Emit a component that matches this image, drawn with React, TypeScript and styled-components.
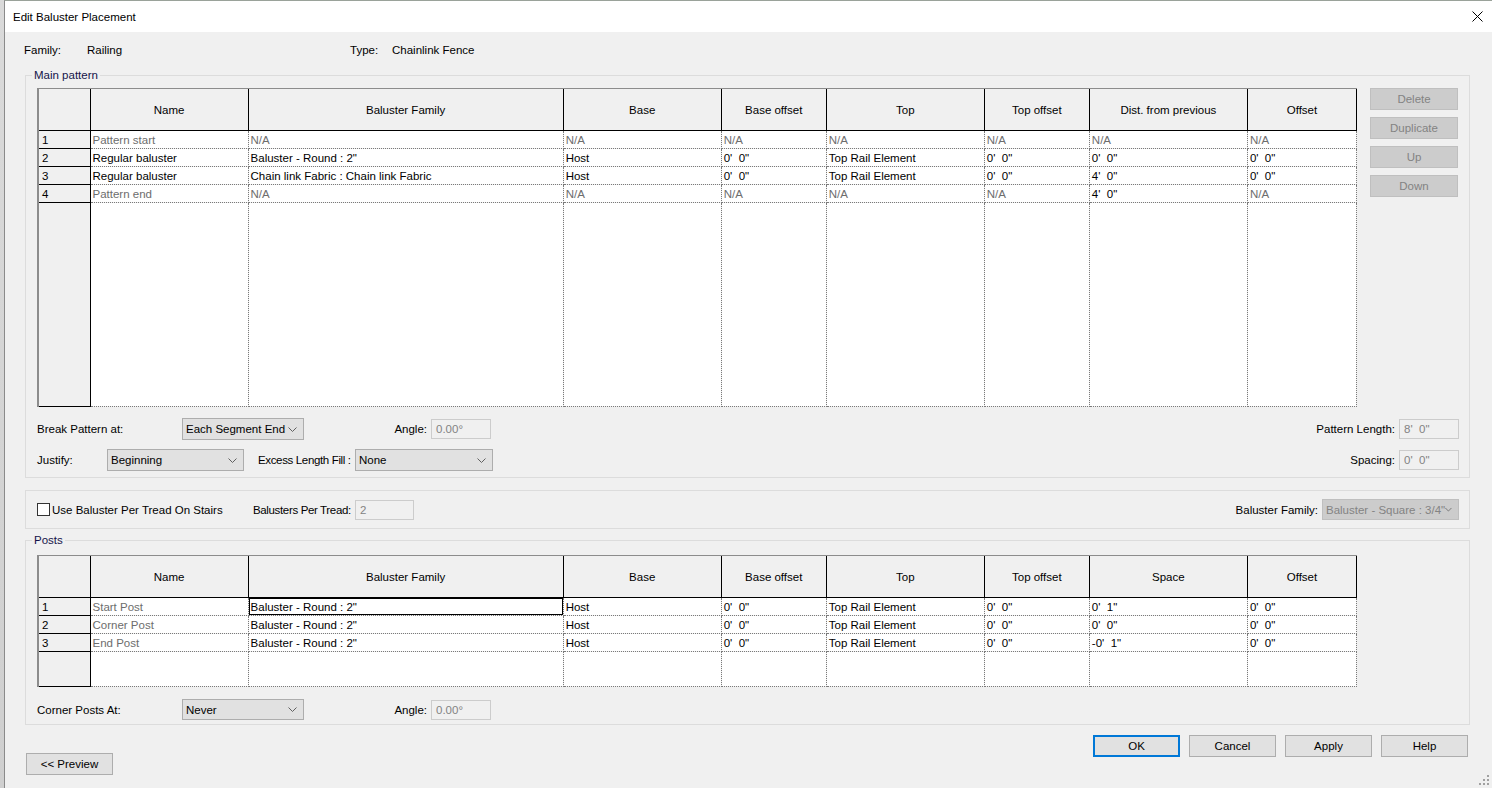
import React from "react";
import styled, { createGlobalStyle } from "styled-components";

const GlobalStyle = createGlobalStyle`
  html, body {
    margin: 0;
    padding: 0;
  }
  body {
    font-family: "Liberation Sans", Arial, sans-serif;
    font-size: 11.5px;
    color: #000;
    background: #f0f0f0;
  }
  #root {
    width: 1492px;
    height: 788px;
    overflow: hidden;
  }
`;

type Cell = { text: string; dim?: boolean; focus?: boolean };
type Row = { num: string; cells: Cell[] };

const mainCols = [
  { name: "Name", width: 158 },
  { name: "Baluster Family", width: 315 },
  { name: "Base", width: 158 },
  { name: "Base offset", width: 105 },
  { name: "Top", width: 158 },
  { name: "Top offset", width: 105 },
  { name: "Dist. from previous", width: 158 },
  { name: "Offset", width: 109 },
];

const postCols = mainCols.map((c) =>
  c.name === "Dist. from previous" ? { ...c, name: "Space" } : c
);

const na = (n: number): Cell[] =>
  Array.from({ length: n }, () => ({ text: "N/A", dim: true }));

const zero = `0'  0"`;

const mainRows: Row[] = [
  { num: "1", cells: [{ text: "Pattern start", dim: true }, ...na(7)] },
  {
    num: "2",
    cells: [
      { text: "Regular baluster" },
      { text: `Baluster - Round : 2"` },
      { text: "Host" },
      { text: zero },
      { text: "Top Rail Element" },
      { text: zero },
      { text: zero },
      { text: zero },
    ],
  },
  {
    num: "3",
    cells: [
      { text: "Regular baluster" },
      { text: "Chain link Fabric : Chain link Fabric" },
      { text: "Host" },
      { text: zero },
      { text: "Top Rail Element" },
      { text: zero },
      { text: `4'  0"` },
      { text: zero },
    ],
  },
  {
    num: "4",
    cells: [
      { text: "Pattern end", dim: true },
      ...na(5),
      { text: `4'  0"` },
      { text: "N/A", dim: true },
    ],
  },
];

const postRow = (num: string, name: string, space: string, focus = false): Row => ({
  num,
  cells: [
    { text: name, dim: true },
    { text: `Baluster - Round : 2"`, focus },
    { text: "Host" },
    { text: zero },
    { text: "Top Rail Element" },
    { text: zero },
    { text: space },
    { text: zero },
  ],
});

const postRows: Row[] = [
  postRow("1", "Start Post", `0'  1"`, true),
  postRow("2", "Corner Post", zero),
  postRow("3", "End Post", `-0'  1"`),
];

const Screen = styled.div`
  display: flex;
  width: 1492px;
  height: 788px;
`;

const BackApp = styled.div`
  width: 4px;
  background: linear-gradient(#dadada, #cfcfcf);
`;

const Dialog = styled.div`
  flex: 1;
  display: flex;
  flex-direction: column;
  position: relative;
  background: #f0f0f0;
  border-left: 1px solid #8a8a8a;
  border-top: 1px solid #9aa29a;
`;

const TitleBar = styled.div`
  height: 31px;
  flex-shrink: 0;
  display: flex;
  align-items: center;
  justify-content: space-between;
  padding: 0 9px 0 8px;
  background: #fff;
`;

const Body = styled.div`
  display: flex;
  flex-direction: column;
  padding: 0 22px 0 20px;
`;

const InfoRow = styled.div`
  display: flex;
  align-items: center;
  height: 14px;
  margin: 11px 0 0 -1px;
`;

const InfoText = styled.span<{ $w?: number }>`
  width: ${(p) => (p.$w ? `${p.$w}px` : "auto")};
  flex-shrink: 0;
`;

const Group = styled.div<{ $mt: number; $pt: number; $pb: number }>`
  position: relative;
  margin-top: ${(p) => p.$mt}px;
  padding: ${(p) => p.$pt}px 10px ${(p) => p.$pb}px 11px;
  border: 1px solid #dcdcdc;
`;

const Legend = styled.span`
  position: absolute;
  top: -8px;
  left: 6px;
  padding: 0 2px;
  line-height: 14px;
  background: #f0f0f0;
  color: #14144a;
`;

const PatternTop = styled.div`
  display: flex;
  align-items: flex-start;
  gap: 13px;
`;

const SideButtons = styled.div`
  display: flex;
  flex-direction: column;
  gap: 7px;
`;

const GridWrap = styled.div`
  width: 1318px;
  border-top: 1px solid #8c8c8c;
  border-left: 2px solid #8c8c8c;
`;

const Grid = styled.table`
  width: 1318px;
  table-layout: fixed;
  border-collapse: collapse;
  border-top-style: hidden;
  border-left-style: hidden;
  font-size: 11.5px;
`;

const HeadCell = styled.th`
  height: 41px;
  padding: 0;
  font-weight: normal;
  text-align: center;
  background: #f0f0f0;
  border: 1px solid #000;
  white-space: nowrap;
`;

const NumCell = styled.td`
  padding: 0 3px;
  background: #f0f0f0;
  border: 1px solid #000;
  text-align: left;
`;

const DataCell = styled.td<{ $dim?: boolean; $focus?: boolean }>`
  padding: 0 2px;
  background: #fff;
  border: 1px dotted #7a7a7a;
  color: ${(p) => (p.$dim ? "#6d6d6d" : "#000")};
  white-space: pre;
  overflow: hidden;
  box-shadow: ${(p) => (p.$focus ? "inset 0 0 0 1px #000" : "none")};
`;

const DataRow = styled.tr<{ $h: number }>`
  height: ${(p) => p.$h}px;
  line-height: 14px;
`;

const ControlRow = styled.div<{ $mt: number; $h?: number }>`
  display: flex;
  align-items: center;
  height: ${(p) => p.$h ?? 22}px;
  margin-top: ${(p) => p.$mt}px;
  white-space: nowrap;
`;

const FieldLabel = styled.span<{
  $w?: number;
  $right?: boolean;
  $ml?: number;
  $mr?: number;
  $tight?: boolean;
}>`
  flex-shrink: 0;
  width: ${(p) => (p.$w ? `${p.$w}px` : "auto")};
  margin-left: ${(p) => p.$ml ?? 0}px;
  margin-right: ${(p) => p.$mr ?? 0}px;
  padding-right: ${(p) => (p.$right ? 4 : 0)}px;
  text-align: ${(p) => (p.$right ? "right" : "left")};
  letter-spacing: ${(p) => (p.$tight ? "-0.35px" : "normal")};
  box-sizing: border-box;
  white-space: nowrap;
`;

const Spacer = styled.div`
  flex: 1;
`;

const SelectBox = styled.div<{ $w: number; $h?: number; $disabled?: boolean }>`
  display: flex;
  align-items: center;
  justify-content: space-between;
  box-sizing: border-box;
  width: ${(p) => p.$w}px;
  height: ${(p) => p.$h ?? 22}px;
  padding: 0 6px 0 3px;
  background: ${(p) => (p.$disabled ? "#cccccc" : "#e1e1e1")};
  border: 1px solid ${(p) => (p.$disabled ? "#bfbfbf" : "#adadad")};
  color: ${(p) => (p.$disabled ? "#838383" : "#000")};
  white-space: nowrap;
  flex-shrink: 0;
`;

const TextInput = styled.div<{ $w: number }>`
  display: flex;
  align-items: center;
  box-sizing: border-box;
  width: ${(p) => p.$w}px;
  height: 20px;
  padding-left: 4px;
  background: #f0f0f0;
  border: 1px solid #cccccc;
  color: #838383;
  white-space: pre;
  flex-shrink: 0;
`;

const Button = styled.div<{ $w?: number; $disabled?: boolean; $default?: boolean }>`
  display: flex;
  align-items: center;
  justify-content: center;
  box-sizing: border-box;
  width: ${(p) => p.$w ?? 87}px;
  height: 22px;
  background: ${(p) => (p.$disabled ? "#cccccc" : "#e1e1e1")};
  border: ${(p) =>
    p.$default ? "2px solid #0078d7" : p.$disabled ? "1px solid #bfbfbf" : "1px solid #adadad"};
  color: ${(p) => (p.$disabled ? "#838383" : "#000")};
  white-space: nowrap;
  flex-shrink: 0;
`;

const CheckArea = styled.div`
  display: flex;
  align-items: center;
  gap: 2px;
  width: 216px;
  flex-shrink: 0;
`;

const CheckBox = styled.span`
  width: 13px;
  height: 13px;
  box-sizing: border-box;
  border: 1px solid #333;
  background: #fff;
`;

const Footer = styled.div`
  display: flex;
  justify-content: space-between;
  align-items: flex-start;
  padding: 10px 2px 0 1px;
`;

const PreviewButton = styled(Button)`
  margin-top: 18px;
`;

const ActionButtons = styled.div`
  display: flex;
  gap: 9px;
`;

const Grip = styled.svg`
  position: absolute;
  right: 3px;
  bottom: 3px;
`;

const Chevron = () => (
  <svg width="9" height="5" viewBox="0 0 9 5">
    <polyline points="0.5,0.5 4.5,4.5 8.5,0.5" fill="none" stroke="#606060" strokeWidth="1" />
  </svg>
);

const Select = ({
  value,
  w,
  h,
  disabled,
}: {
  value: string;
  w: number;
  h?: number;
  disabled?: boolean;
}) => (
  <SelectBox $w={w} $h={h} $disabled={disabled}>
    <span>{value}</span>
    <Chevron />
  </SelectBox>
);

function DataGrid({
  cols,
  rows,
  fillerHeight,
}: {
  cols: { name: string; width: number }[];
  rows: Row[];
  fillerHeight: number;
}) {
  return (
    <GridWrap>
      <Grid>
        <colgroup>
          <col style={{ width: 51 }} />
          {cols.map((c) => (
            <col key={c.name} style={{ width: c.width }} />
          ))}
        </colgroup>
        <thead>
          <tr>
            <HeadCell />
            {cols.map((c) => (
              <HeadCell key={c.name}>{c.name}</HeadCell>
            ))}
          </tr>
        </thead>
        <tbody>
          {rows.map((r) => (
            <DataRow key={r.num} $h={18}>
              <NumCell>{r.num}</NumCell>
              {r.cells.map((c, i) => (
                <DataCell key={i} $dim={c.dim} $focus={c.focus}>
                  {c.text}
                </DataCell>
              ))}
            </DataRow>
          ))}
          <DataRow $h={fillerHeight}>
            <NumCell />
            {cols.map((c) => (
              <DataCell key={c.name} />
            ))}
          </DataRow>
        </tbody>
      </Grid>
    </GridWrap>
  );
}

export default function App() {
  return (
    <Screen>
      <GlobalStyle />
      <BackApp />
      <Dialog>
        <TitleBar>
          <span>Edit Baluster Placement</span>
          <svg width="11" height="11" viewBox="0 0 11 11">
            <path d="M0.5 0.5 L10.5 10.5 M10.5 0.5 L0.5 10.5" stroke="#000" strokeWidth="1" />
          </svg>
        </TitleBar>
        <Body>
          <InfoRow>
            <InfoText $w={63}>Family:</InfoText>
            <InfoText $w={263}>Railing</InfoText>
            <InfoText $w={42}>Type:</InfoText>
            <InfoText>Chainlink Fence</InfoText>
          </InfoRow>

          <Group $mt={18} $pt={12} $pb={6}>
            <Legend>Main pattern</Legend>
            <PatternTop>
              <DataGrid cols={mainCols} rows={mainRows} fillerHeight={204} />
              <SideButtons>
                <Button $w={88} $disabled>Delete</Button>
                <Button $w={88} $disabled>Duplicate</Button>
                <Button $w={88} $disabled>Up</Button>
                <Button $w={88} $disabled>Down</Button>
              </SideButtons>
            </PatternTop>
            <ControlRow $mt={11}>
              <FieldLabel $w={145}>Break Pattern at:</FieldLabel>
              <Select value="Each Segment End" w={122} />
              <FieldLabel $w={127} $right>Angle:</FieldLabel>
              <TextInput $w={60}>0.00°</TextInput>
              <Spacer />
              <FieldLabel $right>Pattern Length:</FieldLabel>
              <TextInput $w={60}>{`8'  0"`}</TextInput>
            </ControlRow>
            <ControlRow $mt={9}>
              <FieldLabel $w={70}>Justify:</FieldLabel>
              <Select value="Beginning" w={137} />
              <FieldLabel $w={97} $ml={14} $tight>Excess Length Fill :</FieldLabel>
              <Select value="None" w={138} />
              <Spacer />
              <FieldLabel $right>Spacing:</FieldLabel>
              <TextInput $w={60}>{`0'  0"`}</TextInput>
            </ControlRow>
          </Group>

          <Group $mt={12} $pt={0} $pb={0}>
            <ControlRow $mt={0} $h={37}>
              <CheckArea>
                <CheckBox />
                <span>Use Baluster Per Tread On Stairs</span>
              </CheckArea>
              <FieldLabel $w={102} $tight>Balusters Per Tread:</FieldLabel>
              <TextInput $w={59}>2</TextInput>
              <Spacer />
              <FieldLabel $right>Baluster Family:</FieldLabel>
              <Select value={`Baluster - Square : 3/4"`} w={137} h={21} disabled />
            </ControlRow>
          </Group>

          <Group $mt={11} $pt={14} $pb={4}>
            <Legend>Posts</Legend>
            <DataGrid cols={postCols} rows={postRows} fillerHeight={35} />
            <ControlRow $mt={12} $h={21}>
              <FieldLabel $w={145}>Corner Posts At:</FieldLabel>
              <Select value="Never" w={122} h={21} />
              <FieldLabel $w={127} $right>Angle:</FieldLabel>
              <TextInput $w={60}>0.00°</TextInput>
            </ControlRow>
          </Group>

          <Footer>
            <PreviewButton>{"<< Preview"}</PreviewButton>
            <ActionButtons>
              <Button $default>OK</Button>
              <Button>Cancel</Button>
              <Button>Apply</Button>
              <Button>Help</Button>
            </ActionButtons>
          </Footer>
        </Body>
        <Grip width="10" height="10" viewBox="0 0 10 10">
          {[
            [8, 0],
            [8, 4],
            [4, 4],
            [8, 8],
            [4, 8],
            [0, 8],
          ].map(([x, y]) => (
            <rect key={`${x}-${y}`} x={x} y={y} width="2" height="2" fill="#a0a0a0" />
          ))}
        </Grip>
      </Dialog>
    </Screen>
  );
}
